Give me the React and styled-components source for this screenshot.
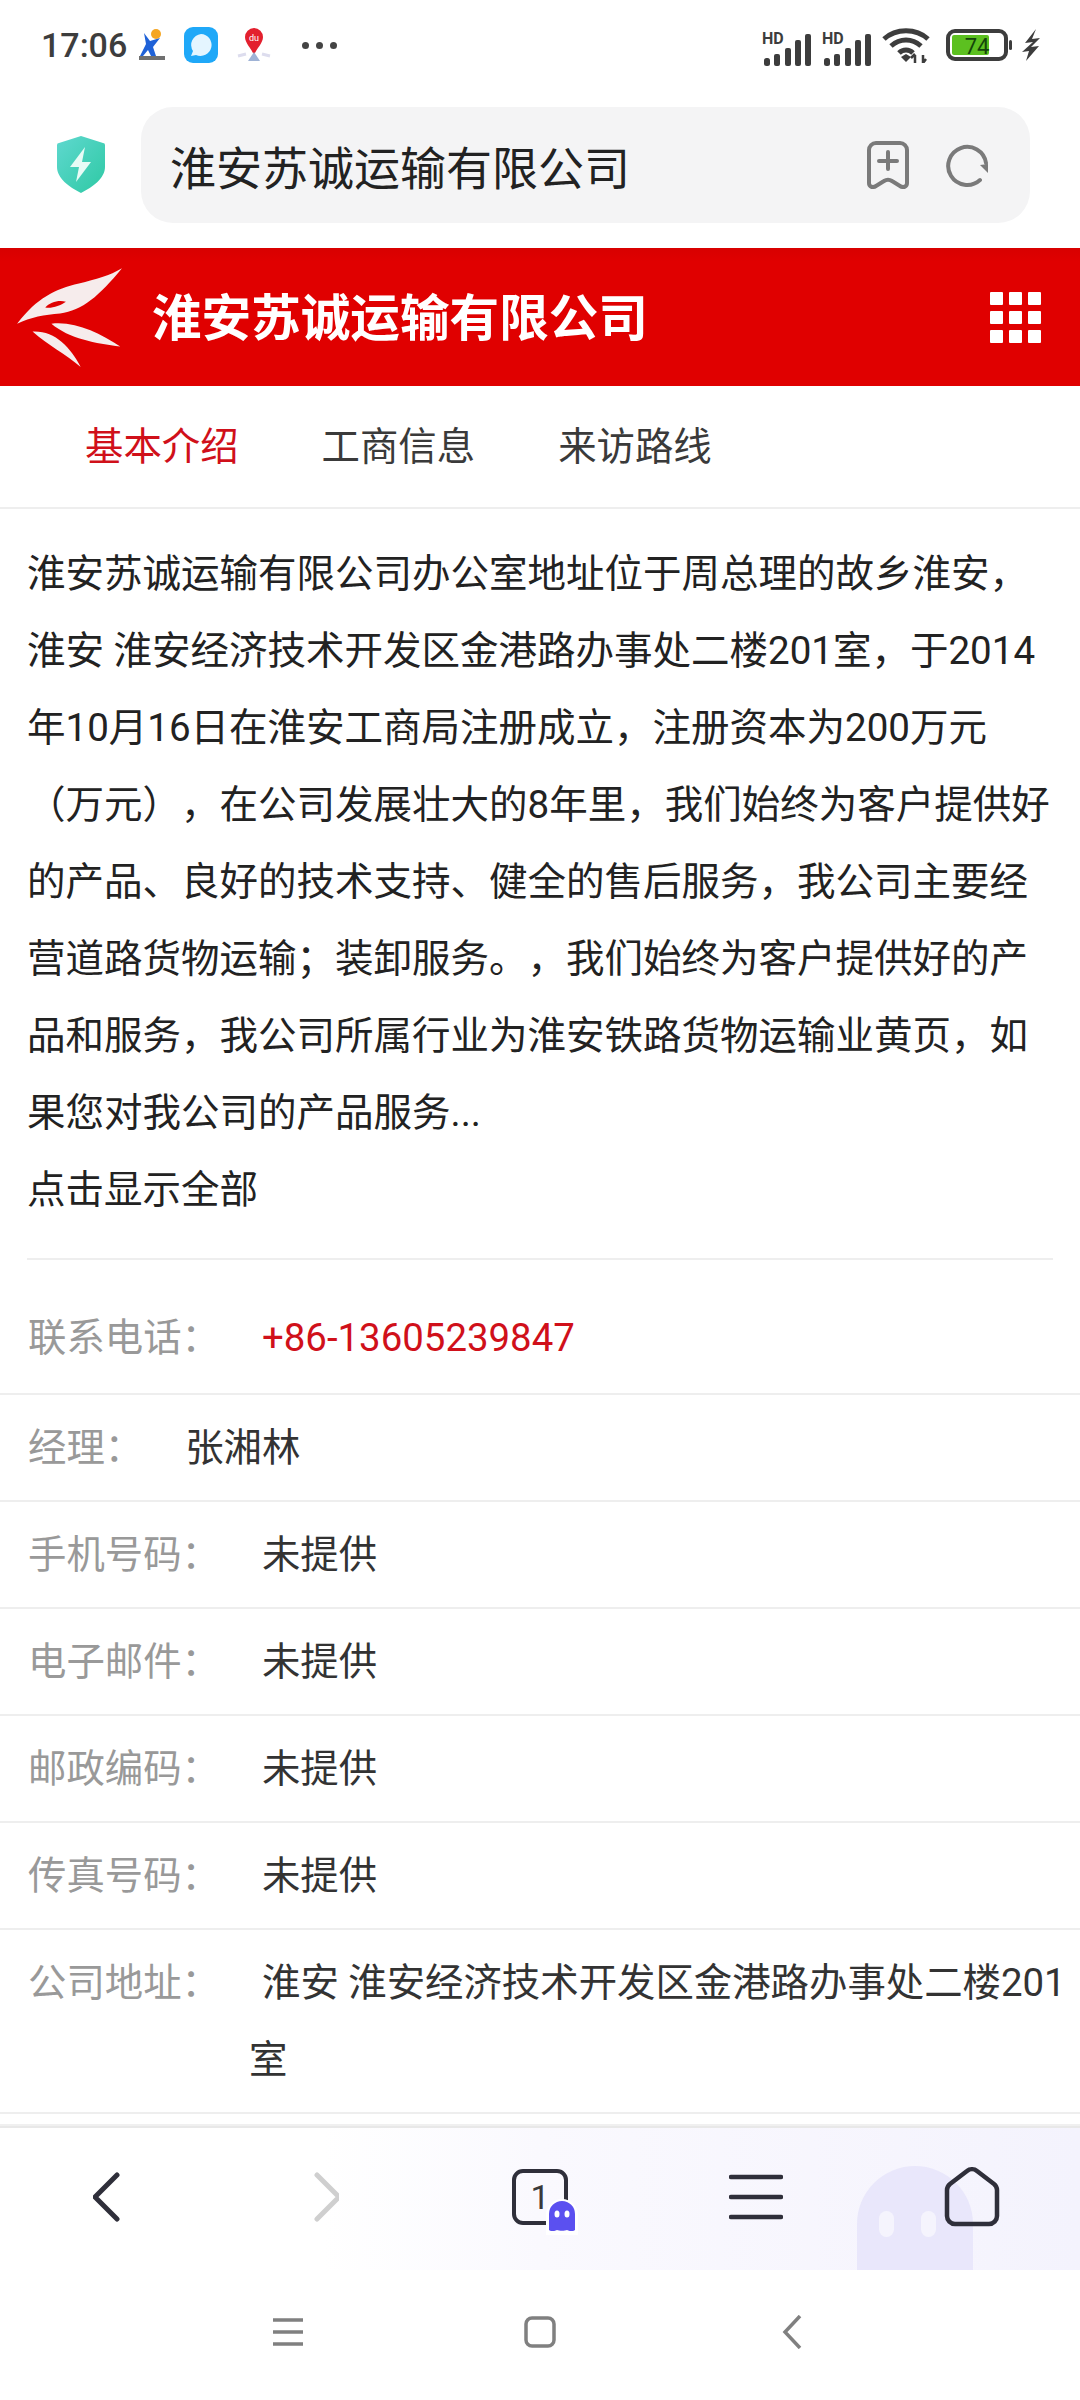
import React from "react";
import styled, { createGlobalStyle } from "styled-components";

const GlobalStyle = createGlobalStyle`
  html, body {
    margin: 0;
    padding: 0;
    background: #fff;
  }
  body {
    font-family: Roboto, "Noto Sans CJK SC", sans-serif;
    color: #222;
    text-spacing-trim: space-all;
  }
`;

const Page = styled.div`
  width: 1080px;
  height: 2400px;
  display: flex;
  flex-direction: column;
  overflow: hidden;
  background: #fff;
`;

/* status bar */
const StatusBar = styled.div`
  height: 90px;
  flex: none;
  display: flex;
  align-items: center;
  padding: 0 40px 0 41px;
  color: #3d3d3d;
`;
const Time = styled.span`
  font-size: 34px;
  font-weight: 500;
  width: 97px;
`;
const NoticeIcons = styled.div`
  display: flex;
  align-items: center;
  gap: 18px;
  flex: 1;
`;
const Dots = styled.div`
  display: flex;
  gap: 7px;
  margin-left: 12px;
  span {
    width: 7px;
    height: 7px;
    border-radius: 50%;
    background: #444;
  }
`;
const SystemIcons = styled.div`
  display: flex;
  align-items: center;
  gap: 10px;
`;
const WifiSlot = styled.div`
  display: flex;
  margin-right: 6px;
`;

/* browser address bar */
const AddressRow = styled.div`
  height: 134px;
  flex: none;
  box-sizing: border-box;
  display: flex;
  align-items: center;
  padding: 14px 67px 0 57px;
`;
const AddressBox = styled.div`
  margin-left: 36px;
  flex: 1;
  height: 116px;
  margin-top: 2px;
  margin-right: -17px;
  border-radius: 32px;
  background: #f4f4f5;
  display: flex;
  align-items: center;
  padding: 0 40px 0 29px;
  font-size: 46px;
  color: #222;
`;
const AddressText = styled.span`
  flex: 1;
`;
const AddressActions = styled.div`
  display: flex;
  align-items: center;
  gap: 37px;
`;

/* red site header */
const SiteHeader = styled.header`
  height: 138px;
  margin-top: 24px;
  flex: none;
  display: flex;
  align-items: center;
  padding: 0 39px 0 17px;
  background: linear-gradient(#d80000, #e00000 14px);
`;
const SiteTitle = styled.h1`
  flex: 1;
  margin: 0 0 6px 30px;
  font-size: 49.6px;
  font-weight: 700;
  color: #fff;
`;
const GridIcon = styled.div`
  display: grid;
  grid-template-columns: repeat(3, 13px);
  grid-auto-rows: 13px;
  gap: 6px;
  span {
    background: #fff;
    border-radius: 1px;
  }
`;

/* tabs */
const Tabs = styled.nav`
  height: 123px;
  flex: none;
  display: flex;
  align-items: center;
  gap: 83px;
  padding: 0 0 7px 85px;
  box-sizing: border-box;
  border-bottom: 2px solid #eee;
`;
const Tab = styled.a`
  font-size: 38.4px;
  color: ${(p) => (p.$active ? "#d0101a" : "#3a3a3a")};
`;

/* company content */
const Main = styled.main`
  flex: 1;
  min-height: 0;
`;
const Intro = styled.section`
  margin: 0 27px;
  padding: 26px 0 30px 0;
  border-bottom: 2px solid #eee;
  font-size: 38.5px;
  line-height: 77px;
  color: #222;
`;
const IntroLine = styled.div`
  white-space: nowrap;
`;
const InfoRow = styled.div`
  padding: ${(p) => (p.$first ? "39px" : "14px")} 0 ${(p) => (p.$first ? "17px" : "14px")} 28px;
  border-bottom: 2px solid #eee;
  font-size: 38.4px;
  line-height: 77px;
  color: #333;
  display: ${(p) => (p.$wrap ? "flex" : "block")};
`;
const Label = styled.span`
  color: #999;
  display: inline-block;
  flex: none;
  white-space: nowrap;
  margin-right: ${(p) => (p.$wrap ? "29px" : "42px")};
  width: ${(p) => (p.$wrap ? "192px" : "auto")};
`;
const Phone = styled.span`
  color: #d0101a;
`;
const WrapValue = styled.div`
  text-indent: 13px;
  width: 826px;
`;
const EndBand = styled.div`
  height: 10px;
  border-bottom: 2px solid #f0f0f0;
`;

/* browser toolbar */
const Toolbar = styled.div`
  position: relative;
  height: 144px;
  flex: none;
  box-sizing: border-box;
  border-top: 2px solid #e8e8e8;
  display: grid;
  grid-template-columns: repeat(5, 216px);
  align-items: center;
  justify-items: center;
  padding: 0 0 4px 0;
  overflow: hidden;
  background: linear-gradient(90deg, #fff 30%, #faf9fe 50%, #f4f3fd 100%);
`;
const ToolButton = styled.div`
  position: relative;
  z-index: 1;
  display: flex;
  align-items: center;
  justify-content: center;
`;
const TabCount = styled.div`
  position: relative;
  width: 56px;
  height: 56px;
  box-sizing: border-box;
  border: 4px solid #2f2f3a;
  border-radius: 11px;
  display: flex;
  align-items: center;
  justify-content: center;
  font-size: 34px;
  color: #3a3a3a;
`;
const GhostBadge = styled.div`
  position: absolute;
  right: -14px;
  bottom: -14px;
  width: 32px;
  height: 36px;
  background: #fff;
  border-radius: 16px 16px 0 0;
  display: flex;
  justify-content: center;
  padding-top: 2px;
  box-sizing: border-box;
`;
const GhostMark = styled.div`
  position: absolute;
  left: 857px;
  top: 38px;
  width: 116px;
  height: 130px;
  border-radius: 58px 58px 0 0;
  background: #e9e7fb;
  &::before,
  &::after {
    content: "";
    position: absolute;
    top: 45px;
    width: 15px;
    height: 26px;
    border-radius: 8px;
    background: #f5f4fd;
  }
  &::before {
    left: 22px;
  }
  &::after {
    left: 64px;
  }
`;

/* android navigation */
const SystemNav = styled.div`
  height: 130px;
  flex: none;
  display: grid;
  grid-template-columns: repeat(3, 252px);
  justify-content: center;
  justify-items: center;
  align-items: center;
  padding: 0 0 6px 0;
  box-sizing: border-box;
`;

const introLines = [
  "淮安苏诚运输有限公司办公室地址位于周总理的故乡淮安，",
  "淮安 淮安经济技术开发区金港路办事处二楼201室，于2014",
  "年10月16日在淮安工商局注册成立，注册资本为200万元",
  "（万元），在公司发展壮大的8年里，我们始终为客户提供好",
  "的产品、良好的技术支持、健全的售后服务，我公司主要经",
  "营道路货物运输；装卸服务。，我们始终为客户提供好的产",
  "品和服务，我公司所属行业为淮安铁路货物运输业黄页，如",
  "果您对我公司的产品服务...",
  "点击显示全部",
];

const rows = [
  ["手机号码：", "未提供"],
  ["电子邮件：", "未提供"],
  ["邮政编码：", "未提供"],
  ["传真号码：", "未提供"],
];

function Signal() {
  return (
    <svg width="50" height="42" viewBox="0 -8 50 42">
      <text x="0" y="12" fontSize="16" fontWeight="700" fontFamily="Roboto" fill="#3d3d3d">
        HD
      </text>
      <rect x="2" y="26" width="6" height="8" rx="2.5" fill="#3d3d3d" />
      <rect x="12" y="22" width="6" height="12" rx="2" fill="#3d3d3d" />
      <rect x="23" y="16" width="6" height="18" rx="2" fill="#3d3d3d" />
      <rect x="33" y="8" width="6" height="26" rx="2" fill="#3d3d3d" />
      <rect x="43" y="2" width="6" height="32" rx="2" fill="#3d3d3d" />
    </svg>
  );
}

function Wifi() {
  return (
    <svg width="48" height="36" viewBox="0 0 48 36" fill="none" stroke="#3d3d3d" strokeWidth="5">
      <path d="M2 12C14 1 34 1 46 12" />
      <path d="M9 19C18 11 30 11 39 19" />
      <path d="M17 26C21 22 27 22 31 26" />
      <path d="M19 30l5-3 5 3-5 5z" fill="#3d3d3d" stroke="none" />
      <path d="M33 36v-8M29 31l4-4M41 36v-8M41 36l3-4" strokeWidth="2.5" />
    </svg>
  );
}

function Battery() {
  return (
    <svg width="66" height="32" viewBox="0 0 66 32">
      <rect x="2" y="2" width="58" height="28" rx="7" fill="#fff" stroke="#3d3d3d" strokeWidth="4" />
      <rect x="6" y="6" width="37" height="20" rx="2" fill="#5cc020" />
      <rect x="63" y="11" width="3" height="10" rx="1.5" fill="#3d3d3d" />
      <text x="31" y="25" textAnchor="middle" fontSize="22" fontFamily="Roboto" fill="#14450a">
        74
      </text>
    </svg>
  );
}

function Bolt() {
  return (
    <svg width="18" height="32" viewBox="0 0 18 32">
      <path d="M14 0L3 14l8-1L0 23l7-1-3 10 13-15-8 1 9-9-8 1z" fill="#3d3d3d" />
    </svg>
  );
}

function Logo() {
  return (
    <svg width="105" height="99" viewBox="50 90 305 288">
      <path
        d="M356 90C320 112 280 122 230 135C160 152 110 175 50 252C90 232 130 226 175 222C240 215 290 170 356 90Z"
        fill="#f6ecec"
      />
      <path d="M132 205C145 190 170 182 192 188C175 200 152 208 132 205Z" fill="#e00000" />
      <path d="M150 252C220 244 290 280 350 318C280 310 200 295 150 252Z" fill="#f6ecec" />
      <path d="M95 275C160 272 205 320 235 378C190 340 140 315 95 275Z" fill="#f6ecec" />
    </svg>
  );
}

export default function App() {
  return (
    <Page>
      <GlobalStyle />
      <StatusBar>
        <Time>17:06</Time>
        <NoticeIcons>
          <svg width="28" height="32" viewBox="0 0 28 32">
            <circle cx="18" cy="5" r="5" fill="#f5a623" />
            <path d="M6 4l6 8 10-3-7 9 3 9h-5l-3-6-5 6H2l6-12z" fill="#1f62d8" />
            <rect x="1" y="27" width="26" height="4" fill="#333" opacity="0.7" />
          </svg>
          <svg width="34" height="36" viewBox="0 0 34 36">
            <rect width="34" height="36" rx="9" fill="#1fa8f8" />
            <path d="M17 7a11 11 0 1 1-5 21l-5 1 2-5A11 11 0 0 1 17 7z" fill="#e4f5ff" />
          </svg>
          <svg width="36" height="34" viewBox="0 0 36 34">
            <path d="M18 0a9 9 0 0 1 9 9c0 6-6 11-9 18-3-7-9-12-9-18a9 9 0 0 1 9-9z" fill="#e3202e" />
            <text x="18" y="13" textAnchor="middle" fontSize="9" fontFamily="Roboto" fill="#fff">
              du
            </text>
            <path d="M18 24l6 9H12z" fill="#9fb3d6" />
            <path d="M2 28l8-2M34 28l-8-2" stroke="#dde" strokeWidth="3" />
          </svg>
          <Dots>
            <span />
            <span />
            <span />
          </Dots>
        </NoticeIcons>
        <SystemIcons>
          <Signal />
          <Signal />
          <WifiSlot>
            <Wifi />
          </WifiSlot>
          <Battery />
          <Bolt />
        </SystemIcons>
      </StatusBar>

      <AddressRow>
        <svg width="48" height="57" viewBox="0 0 48 57">
          <defs>
            <linearGradient id="shield" x1="0" y1="0" x2="1" y2="1">
              <stop offset="0" stopColor="#5fd8cf" />
              <stop offset="1" stopColor="#2ec9a4" />
            </linearGradient>
          </defs>
          <path
            d="M24 0L46 7a2 2 0 0 1 2 2v22c0 11-12 20-24 26C12 51 0 42 0 31V9a2 2 0 0 1 2-2z"
            fill="url(#shield)"
          />
          <path d="M28 11L13 31h9l-3 15 15-20h-9z" fill="#e8fbf6" />
        </svg>
        <AddressBox>
          <AddressText>淮安苏诚运输有限公司</AddressText>
          <AddressActions>
            <svg width="42" height="48" viewBox="0 0 42 48" fill="none" stroke="#7a7a7a" strokeWidth="4" strokeLinejoin="round" strokeLinecap="round">
              <path d="M9 2h24a7 7 0 0 1 7 7v33c0 4-4 5-7 3l-8-5c-3-2-5-2-8 0l-8 5c-3 2-7 1-7-3V9a7 7 0 0 1 7-7z" />
              <path d="M21 11v17M12 20h18" />
            </svg>
            <svg width="44" height="44" viewBox="0 0 44 44" fill="none" stroke="#7a7a7a" strokeWidth="4" strokeLinecap="round">
              <path d="M40 20A19 19 0 1 0 34 37" />
              <path d="M34 22l8-1 0 9z" fill="#7a7a7a" stroke="none" />
            </svg>
          </AddressActions>
        </AddressBox>
      </AddressRow>

      <SiteHeader>
        <Logo />
        <SiteTitle>淮安苏诚运输有限公司</SiteTitle>
        <GridIcon>
          {Array.from({ length: 9 }).map((_, i) => (
            <span key={i} />
          ))}
        </GridIcon>
      </SiteHeader>

      <Tabs>
        <Tab $active>基本介绍</Tab>
        <Tab>工商信息</Tab>
        <Tab>来访路线</Tab>
      </Tabs>

      <Main>
        <Intro>
          {introLines.map((line) => (
            <IntroLine key={line}>{line}</IntroLine>
          ))}
        </Intro>
        <InfoRow $first>
          <Label>联系电话：</Label>
          <Phone>+86-13605239847</Phone>
        </InfoRow>
        <InfoRow>
          <Label>经理：</Label>
          张湘林
        </InfoRow>
        {rows.map(([label, value]) => (
          <InfoRow key={label}>
            <Label>{label}</Label>
            {value}
          </InfoRow>
        ))}
        <InfoRow $wrap>
          <Label $wrap>公司地址：</Label>
          <WrapValue>淮安 淮安经济技术开发区金港路办事处二楼201室</WrapValue>
        </InfoRow>
        <EndBand />
      </Main>

      <Toolbar>
        <GhostMark />
        <ToolButton>
          <svg width="30" height="50" viewBox="2 0 30 50" fill="none" stroke="#2f2f3a" strokeWidth="5" strokeLinecap="round" strokeLinejoin="round">
            <path d="M26 3L4 25l22 22" />
          </svg>
        </ToolButton>
        <ToolButton>
          <svg width="30" height="50" viewBox="-4 0 30 50" fill="none" stroke="#cfcfcf" strokeWidth="5" strokeLinecap="round" strokeLinejoin="round">
            <path d="M4 3l22 22L4 47" />
          </svg>
        </ToolButton>
        <ToolButton>
          <TabCount>
            1
            <GhostBadge>
              <svg width="26" height="30" viewBox="0 0 26 30">
                <path d="M0 13a13 13 0 0 1 26 0v16c-3 2-6 1-8 0-2 1-8 1-10 0-2 1-5 2-8 0z" fill="#5b50f0" />
                <ellipse cx="8" cy="13" rx="2.5" ry="3.5" fill="#fff" />
                <ellipse cx="18" cy="13" rx="2.5" ry="3.5" fill="#fff" />
              </svg>
            </GhostBadge>
          </TabCount>
        </ToolButton>
        <ToolButton>
          <svg width="54" height="46" viewBox="0 0 54 46" stroke="#2f2f3a" strokeWidth="4.5" strokeLinecap="round">
            <path d="M2 3h50M2 23h50M2 43h50" />
          </svg>
        </ToolButton>
        <ToolButton>
          <svg width="56" height="60" viewBox="0 0 56 60" fill="none" stroke="#2f2f3a" strokeWidth="4.5" strokeLinejoin="round">
            <path d="M23 4a8 8 0 0 1 10 0l17 13a8 8 0 0 1 3 6v26a8 8 0 0 1-8 8H11a8 8 0 0 1-8-8V23a8 8 0 0 1 3-6z" />
          </svg>
        </ToolButton>
      </Toolbar>

      <SystemNav>
        <svg width="32" height="30" viewBox="0 0 32 30" stroke="#808080" strokeWidth="3.5">
          <path d="M1 3h30M1 15h30M1 27h30" />
        </svg>
        <svg width="32" height="32" viewBox="0 0 32 32" fill="none" stroke="#808080" strokeWidth="3.5">
          <rect x="2" y="2" width="28" height="28" rx="6" />
        </svg>
        <svg width="20" height="34" viewBox="0 0 20 34" fill="none" stroke="#808080" strokeWidth="3.5">
          <path d="M18 1L3 17l15 16" />
        </svg>
      </SystemNav>
    </Page>
  );
}
